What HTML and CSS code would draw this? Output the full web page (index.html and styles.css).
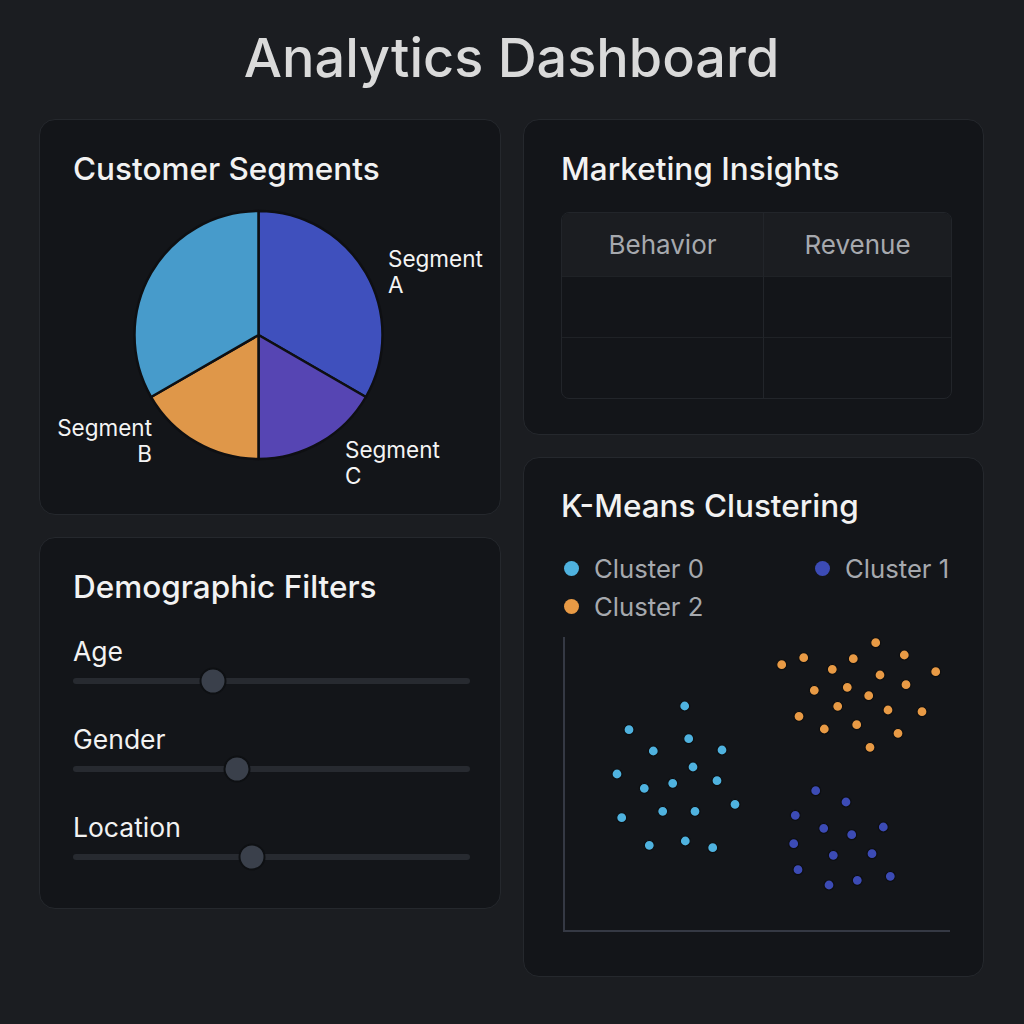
FILE: index.html
```html
<!DOCTYPE html>
<html lang="en">
<head>
<meta charset="utf-8">
<title>Analytics Dashboard</title>
<link rel="stylesheet" href="styles.css">
</head>
<body>
<div class="page">
  <h1 class="page-title">Analytics Dashboard</h1>
  <div class="grid">
    <div class="col">
      <section class="card card-segments">
        <h2 class="card-title">Customer Segments</h2>
        <div class="pie-area">
          <svg class="pie" width="394" height="290" viewBox="0 0 394 290">
            <g stroke="#0e0f12" stroke-width="2.5" stroke-linejoin="round">
              <path d="M185.5 136 L185.5 12 A124 124 0 0 1 292.9 198 Z" fill="#3f50bd"/>
              <path d="M185.5 136 L292.9 198 A124 124 0 0 1 185.5 260 Z" fill="#5645b3"/>
              <path d="M185.5 136 L185.5 260 A124 124 0 0 1 78.1 198 Z" fill="#df9749"/>
              <path d="M185.5 136 L78.1 198 A124 124 0 0 1 185.5 12 Z" fill="#479bcb"/>
            </g>
          </svg>
          <div class="pie-label label-a">Segment<br>A</div>
          <div class="pie-label label-b">Segment<br>B</div>
          <div class="pie-label label-c">Segment<br>C</div>
        </div>
      </section>
      <section class="card card-filters">
        <h2 class="card-title">Demographic Filters</h2>
        <div class="filters">
          <div class="filter">
            <div class="filter-label">Age</div>
            <div class="slider"><div class="track"></div><div class="thumb" style="left:35.3%"></div></div>
          </div>
          <div class="filter">
            <div class="filter-label">Gender</div>
            <div class="slider"><div class="track"></div><div class="thumb" style="left:41.3%"></div></div>
          </div>
          <div class="filter">
            <div class="filter-label">Location</div>
            <div class="slider"><div class="track"></div><div class="thumb" style="left:45.1%"></div></div>
          </div>
        </div>
      </section>
    </div>
    <div class="col">
      <section class="card card-insights">
        <h2 class="card-title">Marketing Insights</h2>
        <div class="table">
          <div class="cell head">Behavior</div>
          <div class="cell head">Revenue</div>
          <div class="cell"></div>
          <div class="cell"></div>
          <div class="cell"></div>
          <div class="cell"></div>
        </div>
      </section>
      <section class="card card-kmeans">
        <h2 class="card-title">K-Means Clustering</h2>
        <div class="legend">
          <div class="legend-item"><span class="dot c0"></span>Cluster 0</div>
          <div class="legend-item"><span class="dot c1"></span>Cluster 1</div>
          <div class="legend-item"><span class="dot c2"></span>Cluster 2</div>
        </div>
        <svg class="plot" width="391" height="300" viewBox="0 0 391 300">
          <path d="M3 3 V297 H389" fill="none" stroke="#353944" stroke-width="2"/>
          <g fill="#e89a45" stroke="#0d0e10" stroke-width="1.2">
            <circle cx="314.7" cy="8.7" r="5"/><circle cx="343.3" cy="21" r="5"/><circle cx="242.7" cy="23.7" r="5"/>
            <circle cx="292.3" cy="24.7" r="5"/><circle cx="220.7" cy="30.7" r="5"/><circle cx="271.3" cy="35.3" r="5"/>
            <circle cx="374.7" cy="37.7" r="5"/><circle cx="319" cy="41" r="5"/><circle cx="345" cy="50.7" r="5"/>
            <circle cx="253.3" cy="56.3" r="5"/><circle cx="286.3" cy="53.3" r="5"/><circle cx="307.7" cy="61.7" r="5"/>
            <circle cx="276.7" cy="72.3" r="5"/><circle cx="327" cy="76" r="5"/><circle cx="361" cy="77.7" r="5"/>
            <circle cx="238" cy="82.3" r="5"/><circle cx="295.7" cy="90.7" r="5"/><circle cx="263.3" cy="95" r="5"/>
            <circle cx="337" cy="99.3" r="5"/><circle cx="309" cy="113.3" r="5"/>
          </g>
          <g fill="#4fb2df" stroke="#0d0e10" stroke-width="1.2">
            <circle cx="123.7" cy="72" r="5"/><circle cx="68" cy="95.7" r="5"/><circle cx="127.7" cy="104.7" r="5"/>
            <circle cx="92.3" cy="117" r="5"/><circle cx="161" cy="116" r="5"/><circle cx="132" cy="133" r="5"/>
            <circle cx="56" cy="140" r="5"/><circle cx="111.7" cy="149.3" r="5"/><circle cx="156" cy="146.7" r="5"/>
            <circle cx="83.3" cy="154.3" r="5"/><circle cx="174" cy="170.3" r="5"/><circle cx="101.7" cy="177.3" r="5"/>
            <circle cx="134" cy="177.3" r="5"/><circle cx="60.7" cy="183.7" r="5"/><circle cx="88.3" cy="211.3" r="5"/>
            <circle cx="124.3" cy="207" r="5"/><circle cx="151.7" cy="213.7" r="5"/>
          </g>
          <g fill="#3c4bb5" stroke="#0d0e10" stroke-width="1.2">
            <circle cx="254.7" cy="156.7" r="5"/><circle cx="285" cy="168" r="5"/><circle cx="234.3" cy="181.3" r="5"/>
            <circle cx="322.3" cy="193" r="5"/><circle cx="262.7" cy="194.3" r="5"/><circle cx="290.7" cy="200.7" r="5"/>
            <circle cx="232.7" cy="209.7" r="5"/><circle cx="272.3" cy="221.3" r="5"/><circle cx="311" cy="219.7" r="5"/>
            <circle cx="237" cy="235.7" r="5"/><circle cx="329.3" cy="242.3" r="5"/><circle cx="296.3" cy="246.3" r="5"/>
            <circle cx="268" cy="251" r="5"/>
          </g>
        </svg>
      </section>
    </div>
  </div>
</div>
</body>
</html>
```
FILE: styles.css
```css
* { box-sizing: border-box; }

html, body {
  margin: 0;
  background: #1b1d21;
}

body {
  font-family: Inter, "Noto Sans", "Liberation Sans", sans-serif;
  color: #f1f1f1;
  width: 1024px;
  height: 1024px;
  overflow: hidden;
}

.page {
  padding: 31px 40px 0 39px;
}

.page-title {
  margin: 0 0 34px;
  height: 54px;
  font-size: 54px;
  line-height: 54px;
  font-weight: 500;
  text-align: center;
  color: #dadada;
}

.grid {
  display: grid;
  grid-template-columns: 462px 461px;
  column-gap: 22px;
  align-items: start;
}

.col {
  display: flex;
  flex-direction: column;
  gap: 22px;
}

.card {
  background: #131519;
  border: 1px solid #25282d;
  border-radius: 16px;
}

.card-title {
  margin: 0;
  font-size: 31.5px;
  line-height: 32px;
  font-weight: 500;
  color: #f2f2f2;
  white-space: nowrap;
}

/* Customer Segments */
.card-segments {
  padding: 33px 33px 25px 33px;
}

.pie-area {
  position: relative;
  margin-top: 14px;
  height: 290px;
}

.pie {
  display: block;
}

.pie-label {
  position: absolute;
  font-size: 22.5px;
  line-height: 26px;
  color: #f4f4f4;
}

.label-a { left: 315px; top: 47px; }
.label-b { right: 315px; top: 216px; text-align: right; }
.label-c { left: 272px; top: 238px; }

/* Demographic Filters */
.card-filters {
  padding: 33px 30px 37px 33px;
}

.filters {
  margin-top: 34px;
  display: flex;
  flex-direction: column;
  gap: 30px;
}

.filter-label {
  font-size: 26.5px;
  line-height: 29px;
  color: #f2f2f2;
}

.slider {
  position: relative;
  margin-top: 1px;
  height: 28px;
  display: flex;
  align-items: center;
}

.track {
  width: 100%;
  height: 6px;
  border-radius: 3px;
  background: #272a30;
}

.thumb {
  position: absolute;
  top: 50%;
  width: 27px;
  height: 27px;
  border-radius: 50%;
  background: #3a404b;
  border: 2px solid #0e1013;
  transform: translate(-50%, -50%);
}

/* Marketing Insights */
.card-insights {
  padding: 33px 31px 35px 37px;
}

.table {
  margin-top: 27px;
  display: grid;
  grid-template-columns: 202px 1fr;
  grid-template-rows: 63px 61px 61px;
  border: 1px solid #22252a;
  border-radius: 8px;
  overflow: hidden;
  background: #131519;
}

.cell {
  border-top: 1px solid #1f2226;
}

.cell:nth-child(odd) {
  border-right: 1px solid #22252a;
}

.cell.head {
  border-top: none;
  background: #1b1d21;
  display: flex;
  align-items: center;
  justify-content: center;
  font-size: 26px;
  color: #a6a9ae;
}

/* K-Means */
.card-kmeans {
  padding: 32px 31px 42px 37px;
}

.legend {
  margin-top: 27px;
  padding-left: 3px;
  display: grid;
  grid-template-columns: 251px auto;
  grid-auto-rows: 38px;
}

.legend-item {
  display: flex;
  align-items: center;
  gap: 15px;
  font-size: 25.7px;
  color: #a6a9ae;
}

.dot {
  width: 15px;
  height: 15px;
  border-radius: 50%;
  flex: none;
}

.dot.c0 { background: #4fb2df; }
.dot.c1 { background: #3c4bb5; }
.dot.c2 { background: #e89a45; }

.plot {
  display: block;
  margin-top: 9px;
}
```
